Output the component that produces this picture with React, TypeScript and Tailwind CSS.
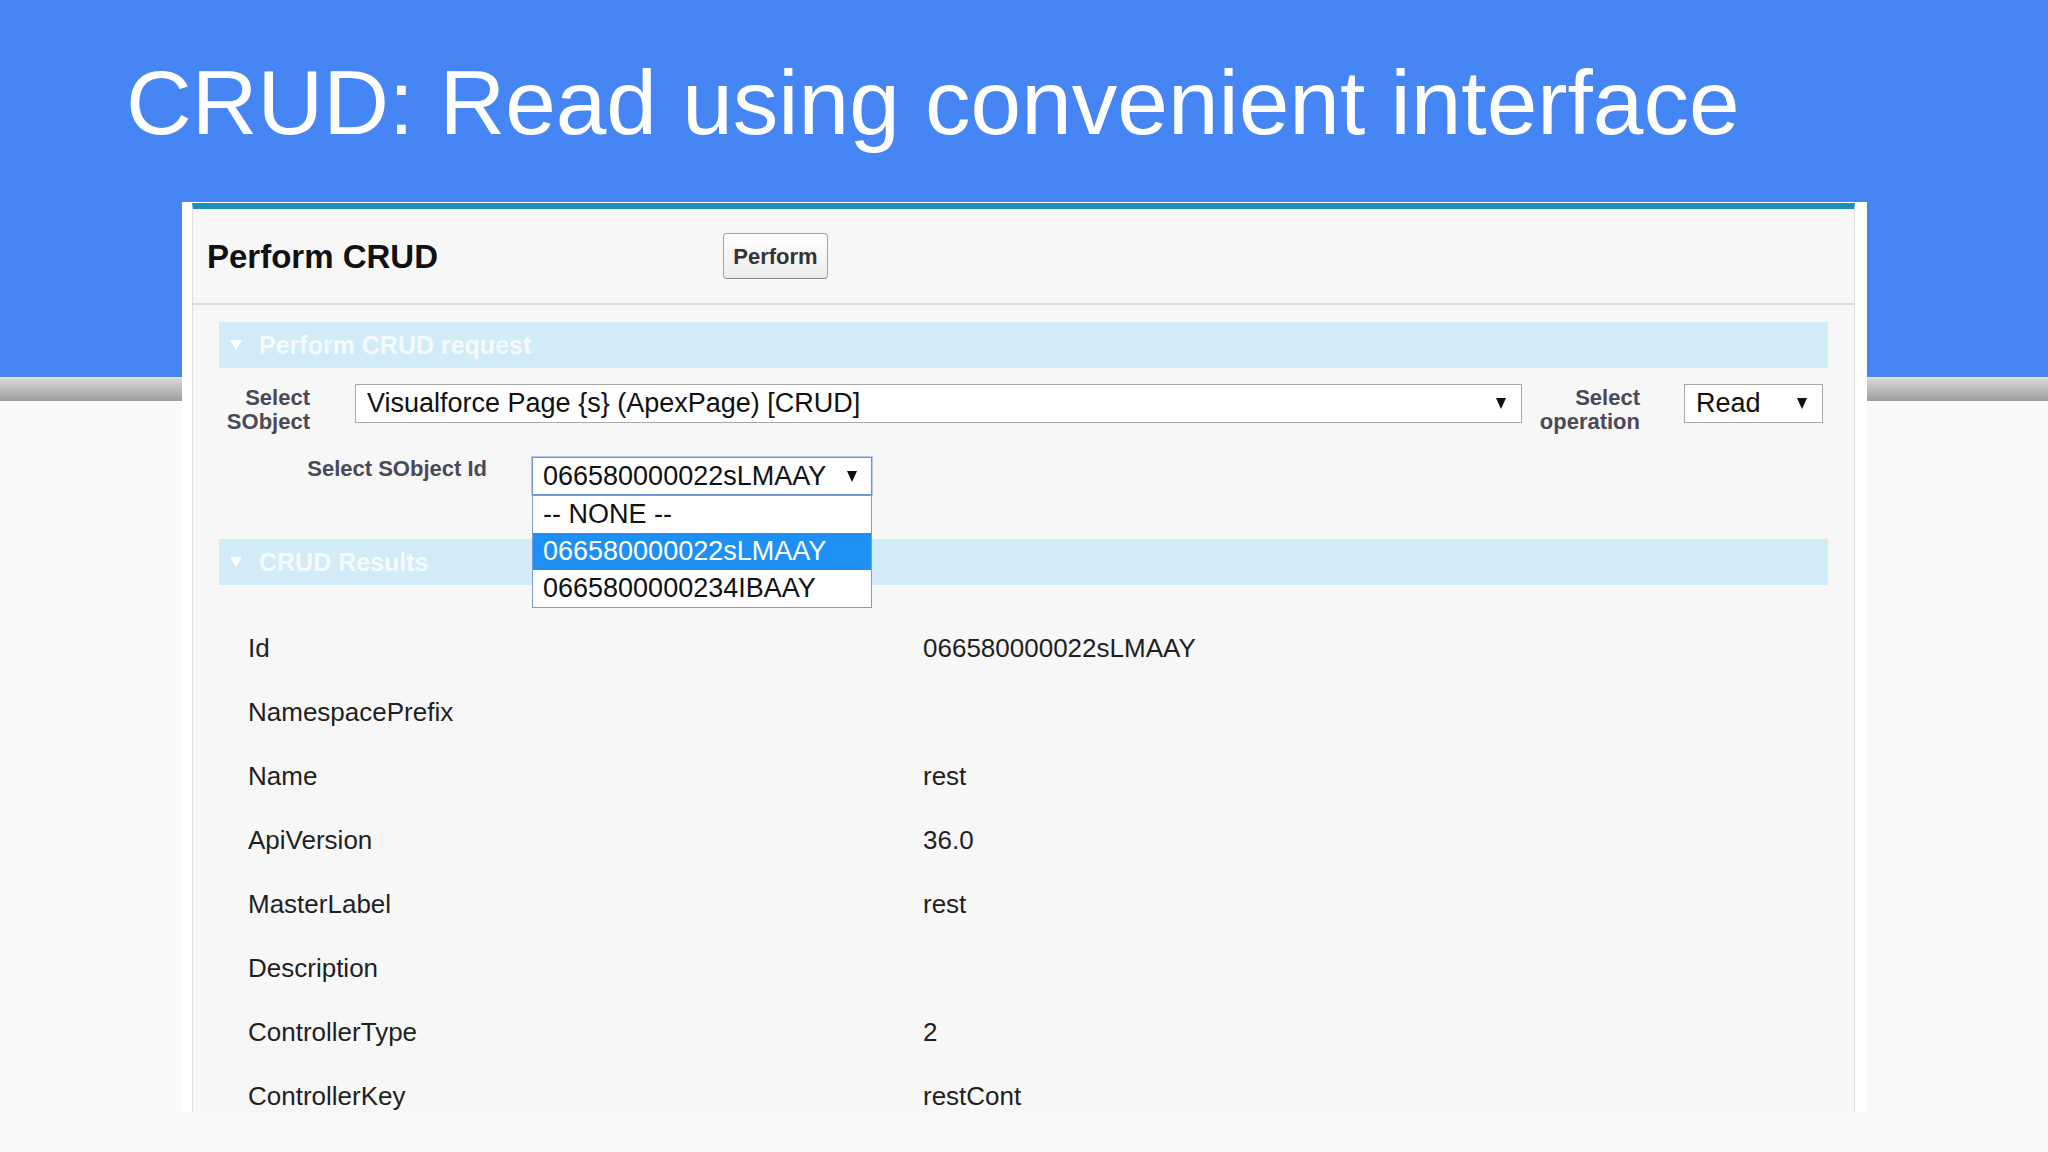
import React from "react"

const font = "font-['Liberation_Sans',Arial,sans-serif]"

function Arrow() {
  return (
    <svg width="10" height="11" viewBox="0 0 10 11" className="shrink-0">
      <polygon points="0,0 10,0 5,11" fill="#111" />
    </svg>
  )
}

function SectionBar({ title }: { title: string }) {
  return (
    <div className="flex h-[46px] items-center bg-[#d1ebf8] pl-[11px]">
      <svg width="12" height="10" viewBox="0 0 12 10" className="shrink-0">
        <polygon points="0,0 12,0 6,10" fill="#ffffff" />
      </svg>
      <span className="ml-[17px] text-[25px] font-bold leading-none text-[#f4fafd]">{title}</span>
    </div>
  )
}

const results: [string, string][] = [
  ["Id", "066580000022sLMAAY"],
  ["NamespacePrefix", ""],
  ["Name", "rest"],
  ["ApiVersion", "36.0"],
  ["MasterLabel", "rest"],
  ["Description", ""],
  ["ControllerType", "2"],
  ["ControllerKey", "restCont"],
]

export default function App() {
  return (
    <div
      className={`${font} relative h-[1152px] w-[2048px] overflow-hidden bg-[linear-gradient(180deg,#4686f4_0px,#4686f4_377px,#f2f2f2_377px,#d6d6d6_379px,#9d9d9d_401px,#fafafa_401px)]`}
    >
      {/* Slide title */}
      <h1 className="pl-[126px] pt-[57px] text-[91px] leading-[91px] text-white">
        CRUD: Read using convenient interface
      </h1>

      {/* Screenshot panel */}
      <div className="ml-[182px] mt-[54px] h-[910px] w-[1685px] bg-white pl-[10px] pr-[12px] pt-px">
        <div className="h-full overflow-hidden border-x border-t-[6px] border-x-[#dedede] border-t-[#1b8fbb] bg-[#f7f7f8]">
          {/* Header */}
          <div className="flex h-[96px] items-center border-b-2 border-[#dcdcdc] pl-[14px]">
            <div className="w-[516px] text-[33px] font-bold leading-none text-[#111]">Perform CRUD</div>
            <button className="flex h-[46px] w-[105px] items-center justify-center rounded-[4px] border border-[#a3a3a3] border-b-[#8a8a8a] bg-[linear-gradient(180deg,#ffffff,#ececec)] text-[22px] font-bold text-[#333]">
              Perform
            </button>
          </div>

          {/* Body */}
          <div className="px-[26px] pt-[17px]">
            <SectionBar title="Perform CRUD request" />

            <div className="mt-[16px] flex h-[39px] items-start">
              <div className="mt-[2px] w-[91px] text-right text-[22px] font-bold leading-[24px] text-[#4a4a56]">
                Select
                <br />
                SObject
              </div>
              <div className="ml-[45px] flex h-[39px] w-[1167px] items-center justify-between border border-[#a9a9a9] bg-white pl-[11px] pr-[15px] text-[27px] text-[#111]">
                <span>Visualforce Page {"{s}"} (ApexPage) [CRUD]</span>
                <Arrow />
              </div>
              <div className="mt-[2px] w-[118px] text-right text-[22px] font-bold leading-[24px] text-[#4a4a56]">
                Select
                <br />
                operation
              </div>
              <div className="ml-[44px] flex h-[39px] w-[139px] items-center justify-between border border-[#a9a9a9] bg-white pl-[11px] pr-[15px] text-[27px] text-[#111]">
                <span>Read</span>
                <Arrow />
              </div>
            </div>

            <div className="mt-[34px] flex items-start">
              <div className="w-[268px] text-right text-[22px] font-bold leading-[24px] text-[#4a4a56]">
                Select SObject Id
              </div>
              <div className="relative ml-[45px] w-[340px]">
                <div className="flex h-[38px] items-center justify-between border border-[#6d93d2] bg-white pl-[10px] pr-[14px] text-[27px] text-[#111] shadow-[0_0_0_1px_#b4c8ec]">
                  <span>066580000022sLMAAY</span>
                  <Arrow />
                </div>
                {/* Open dropdown list */}
                <div className="absolute left-0 top-full z-10 w-full border border-[#7b9cd3] bg-white text-[27px] leading-[37px] text-[#111]">
                  <div className="h-[37px] pl-[10px]">-- NONE --</div>
                  <div className="h-[37px] bg-[#1e8ff5] pl-[10px] text-white">066580000022sLMAAY</div>
                  <div className="h-[37px] pl-[10px]">0665800000234IBAAY</div>
                </div>
              </div>
            </div>

            <div className="mt-[44px]">
              <SectionBar title="CRUD Results" />
            </div>

            <div className="pl-[29px] pt-[31px]">
              {results.map(([label, value]) => (
                <div key={label} className="flex h-[64px] text-[26px] leading-[64px] text-[#1f1f1f]">
                  <div className="w-[675px]">{label}</div>
                  <div>{value}</div>
                </div>
              ))}
            </div>
          </div>
        </div>
      </div>
    </div>
  )
}
